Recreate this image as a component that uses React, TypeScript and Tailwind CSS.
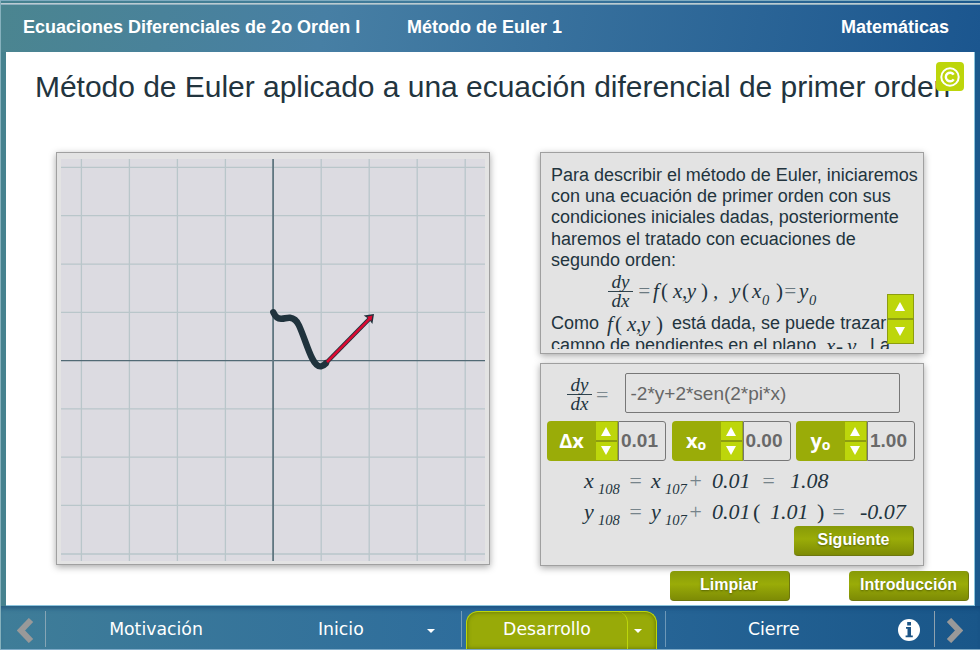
import React from "react";

const SANS = "font-['Liberation_Sans',Arial,sans-serif]";
const MATH = "font-['Liberation_Serif',serif] italic";

// A piece of a formula; `w` is the advance up to the next piece.
function T({ w, c = "", children }: { w: string; c?: string; children?: React.ReactNode }) {
  return <span className={`inline-block shrink-0 whitespace-pre ${w} ${c}`}>{children}</span>;
}

function Fraction() {
  return (
    <span className={`flex w-[25px] shrink-0 flex-col items-center text-[19px] leading-[19px] ${MATH}`}>
      <span className="h-[18px] w-full border-b border-[#30434d] text-center leading-[15px]">dy</span>
      <span className="h-[18px] text-center leading-[18px]">dx</span>
    </span>
  );
}

function Arrow({ down = false }: { down?: boolean }) {
  return (
    <svg viewBox="0 0 10 9" className="mr-[1px] h-[9px] w-[10px]" fill="#fff">
      {down ? <path d="M0 0H10L5 9Z" /> : <path d="M5 0L10 9H0Z" />}
    </svg>
  );
}

function Button({ children }: { children: React.ReactNode }) {
  return (
    <button
      className={`h-[30px] w-[120px] rounded-[4px] border-r border-b border-[#6d760f] bg-linear-to-b from-[#879a08] via-[#9aac08] via-45% to-[#7d8b05] pb-[2px] text-center text-[16px] font-bold text-white [text-shadow:0_1px_2px_rgba(50,60,0,0.6)] ${SANS}`}
    >
      {children}
    </button>
  );
}

function Spinner({ label, sub, value }: { label: string; sub?: boolean; value: string }) {
  return (
    <div className="flex h-[40px] w-[119px] shrink-0">
      <div className="flex w-[49px] items-center justify-center rounded-l-[4px] bg-[#9aac08] font-['Open_Sans','Noto_Sans',sans-serif] text-[20px] font-bold text-white">
        <span>{label}</span>
        {sub && <span className="pt-[6px] text-[14px]">o</span>}
      </div>
      <div className="flex w-[22px] flex-col border border-l-0 border-[#9aac10] bg-[#bdd60b]">
        <div className="flex h-[20px] items-center justify-center border-b-2 border-[#8d9d10]"><Arrow /></div>
        <div className="flex flex-1 items-center justify-center pb-[1px]"><Arrow down /></div>
      </div>
      <div className="flex flex-1 items-center rounded-r-[3px] border border-[#777] pt-[1px] pl-[2px] text-[19px] font-bold text-[#696969]">
        {value}
      </div>
    </div>
  );
}

const gridX = [81.4, 129.4, 177.4, 225.4, 321.2, 369.2, 417.2, 465.2];
const gridY = [167.4, 215.7, 264.2, 312.4, 408.8, 457.2, 505.4, 554];

function Plot() {
  return (
    <svg viewBox="61 159 424 402" className="h-[402px] w-[424px] bg-[#dcdbe1]">
      <g stroke="#b9c6ca" strokeWidth="1.3">
        {gridX.map((x) => <path key={x} d={`M${x} 159V561`} />)}
        {gridY.map((y) => <path key={y} d={`M61 ${y}H485`} />)}
      </g>
      <path d="M61 360.6H485" stroke="#526a75" strokeWidth="1.2" />
      <path d="M273.1 159V561" stroke="#607680" strokeWidth="1.8" />
      <path
        d="M273.3 312.3C275.5 317.5 278 319 281.5 318.8C285 318.5 287 317.6 290 317.8C294 318.2 296.5 320 299 325.5C304 336.5 307.5 349 312 358C315.5 365 318 366.8 321 366.3C323 366 324.5 364.8 326 363.2"
        fill="none"
        stroke="#20333d"
        strokeWidth="6.4"
        strokeLinecap="round"
        strokeLinejoin="round"
      />
      <path d="M327 362L370.5 317.8" stroke="#20333d" strokeWidth="4.2" />
      <path d="M374 314L363.7 315.4L367 317.8L370.6 321.4L372.4 324Z" fill="#20333d" />
      <path d="M327 362L371 317.3" stroke="#dc0a32" strokeWidth="2.5" />
      <path d="M372.5 315.5L367 316.8L371.2 321Z" fill="#dc0a32" />
    </svg>
  );
}

const panel = "border border-[#a0a0a0] bg-[#e3e3e3] shadow-[0_2px_7px_rgba(0,0,0,0.35)]";

export default function App() {
  return (
    <div className={`flex h-[650px] w-[980px] flex-col overflow-hidden border-l border-[#86b1bd] bg-linear-to-r from-[#46828f] via-[#3d789d] via-50% to-[#1b598d] text-[#22343e] ${SANS}`}>
      <div className="h-[3px] shrink-0 border-t border-[#7fabc0]" />
      <div className="h-[2px] shrink-0 border-y border-t-[#bccbd2] border-b-[#8eafbf]" />
      <header className="flex h-[47px] shrink-0 items-center bg-linear-[100deg] from-[#4b8590] via-[#477fa4] via-33% to-[#1b568f] pb-[3px] pl-[22px] text-[18px] font-bold whitespace-nowrap text-white">
        <span className="w-[384px]">Ecuaciones Diferenciales de 2o Orden I</span>
        <span className="flex-1">Método de Euler 1</span>
        <span className="pr-[31px]">Matemáticas</span>
      </header>

      <main className="relative ml-[5px] flex h-[554px] w-[969px] shrink-0 flex-col border-r border-b border-[#8cc4dc] bg-white">
        <h1 className="h-[100px] pt-[17px] pl-[29px] text-[30px] leading-[36px] font-normal tracking-[-0.03px] whitespace-nowrap">
          Método de Euler aplicado a una ecuación diferencial de primer orden
        </h1>
        <div className="absolute top-[10px] right-[10px] flex h-[29px] w-[28px] items-center justify-center rounded-[4px] bg-[#bdd60b]">
          <svg viewBox="0 0 20 20" className="h-[20px] w-[20px]" fill="none" stroke="#fff">
            <circle cx="10" cy="10" r="8.7" strokeWidth="2" />
            <path d="M13.7 7.6A4.3 4.3 0 1 0 13.7 12.4" strokeWidth="2.4" />
          </svg>
        </div>

        <div className="flex gap-[50px] pl-[50px]">
          <section className={`flex h-[413px] w-[434px] shrink-0 pt-[6px] pl-[4px] ${panel}`}>
            <Plot />
          </section>

          <div className="flex w-[384px] shrink-0 flex-col gap-[9px]">
            <section className={`relative h-[202px] pt-[12px] pl-[10px] ${panel}`}>
              <div className="h-[184px] overflow-hidden text-[18px] leading-[21.2px] whitespace-nowrap">
                <p className="tracking-[-0.01px]">
                  Para describir el método de Euler, iniciaremos<br />
                  con una ecuación de primer orden con sus<br />
                  condiciones iniciales dadas, posteriormente<br />
                  haremos el tratado con ecuaciones de<br />
                  segundo orden:
                </p>
                <div className={`flex h-[42px] items-center pl-[57px] text-[21px] ${MATH}`}>
                  <Fraction />
                  <T w="w-[20px]" c="pl-[4px] text-[#6b7980]">=</T>
                  <T w="w-[8px]">f</T>
                  <T w="w-[12px]" c="not-italic">(</T>
                  <T w="w-[28px]" c="tracking-[-0.4px]">x,y</T>
                  <T w="w-[12px]" c="not-italic">)</T>
                  <T w="w-[18px]">,</T>
                  <T w="w-[11px]">y</T>
                  <T w="w-[10px]" c="not-italic">(</T>
                  <T w="w-[10px]">x</T>
                  <T w="w-[14px]" c="pt-[17px] text-[14.5px]">0</T>
                  <T w="w-[7px]" c="not-italic">)</T>
                  <T w="w-[16px]" c="text-[#6b7980]">=</T>
                  <T w="w-[10px]">y</T>
                  <T w="w-[10px]" c="pt-[17px] text-[14.5px]">0</T>
                </div>
                <div className="flex h-[22px] items-center">
                  <T w="w-[56px]">Como</T>
                  <span className={`flex w-[65px] text-[21px] leading-[22px] ${MATH}`}>
                    <T w="w-[8px]">f</T>
                    <T w="w-[12px]" c="not-italic">(</T>
                    <T w="w-[29px]" c="tracking-[-0.4px]">x,y</T>
                    <T w="w-[11px]" c="not-italic">)</T>
                  </span>
                  <span>está dada, se puede trazar</span>
                </div>
                <div className="flex h-[22px] items-center">
                  <T w="w-[275px]">campo de pendientes en el plano</T>
                  <span className={`flex w-[44px] text-[21px] leading-[20px] ${MATH}`}>
                    <T w="w-[10px]">x</T>
                    <T w="w-[11px]">-</T>
                    <T w="w-[14px]">y</T>
                  </span>
                  <span>La</span>
                </div>
              </div>
              <div className="absolute top-[141px] right-[9px] flex h-[50px] w-[27px] flex-col border border-[#8d9d10] bg-[#bdd60b]">
                <div className="flex h-[25px] items-center justify-center border-b-2 border-[#8d9d10]"><Arrow /></div>
                <div className="flex flex-1 items-center justify-center"><Arrow down /></div>
              </div>
            </section>

            <section className={`flex h-[203px] flex-col pt-[9px] ${panel}`}>
              <div className="flex h-[40px] items-center pl-[26px]">
                <span className="pt-[3px]"><Fraction /></span>
                <span className="w-[32.5px] pt-[2px] pl-[4px] text-[22px] text-[#7d898f] font-['Liberation_Serif',serif]">=</span>
                <div className="flex h-[40px] w-[275px] items-center rounded-[2px] border border-[#777] pt-[2px] pl-[5px] text-[19px] text-[#666]">
                  -2*y+2*sen(2*pi*x)
                </div>
              </div>
              <div className="flex gap-[5.5px] pt-[8px] pl-[6px]">
                <Spinner label="Δx" value="0.01" />
                <Spinner label="x" sub value="0.00" />
                <Spinner label="y" sub value="1.00" />
              </div>
              <div className={`flex h-[31px] items-center pt-[7px] pl-[43px] text-[22px] ${MATH}`}>
                <T w="w-[14px]">x</T>
                <T w="w-[30px]" c="pt-[20px] text-[14.6px]">108</T>
                <T w="w-[23px]" c="text-[#76838a]">=</T>
                <T w="w-[14px]">x</T>
                <T w="w-[23px]" c="pt-[20px] text-[14.6px]">107</T>
                <T w="w-[24px]" c="text-[#76838a]">+</T>
                <T w="w-[49px]">0.01</T>
                <T w="w-[29px]" c="text-[#76838a]">=</T>
                <T w="w-[40px]">1.08</T>
              </div>
              <div className={`flex h-[31px] items-center pt-[7px] pl-[43px] text-[22px] ${MATH}`}>
                <T w="w-[14px]">y</T>
                <T w="w-[30px]" c="pt-[20px] text-[14.6px]">108</T>
                <T w="w-[23px]" c="text-[#76838a]">=</T>
                <T w="w-[14px]">y</T>
                <T w="w-[23px]" c="pt-[20px] text-[14.6px]">107</T>
                <T w="w-[24px]" c="text-[#76838a]">+</T>
                <T w="w-[41px]">0.01</T>
                <T w="w-[17px]" c="not-italic">(</T>
                <T w="w-[47px]">1.01</T>
                <T w="w-[14px]" c="not-italic">)</T>
                <T w="w-[29px]" c="text-[#76838a]">=</T>
                <T w="w-[46px]">-0.07</T>
              </div>
              <div className="mt-[3px] flex justify-end pr-[9px]">
                <Button>Siguiente</Button>
              </div>
            </section>
          </div>
        </div>
        <div className="mt-[5px] flex gap-[59.5px] pl-[663.5px]">
          <Button>Limpiar</Button>
          <Button>Introducción</Button>
        </div>
      </main>

      <nav className="flex h-[44px] shrink-0 items-center border-b border-[#7fabc8] bg-linear-to-r from-[#3f7d98] via-[#2d6c9c] via-50% to-[#195689] font-['DejaVu_Sans',sans-serif] text-[17.3px] text-white shadow-[inset_0_5px_5px_-3px_rgba(10,50,100,0.5)]">
        <div className="mt-[3px] flex h-[36px] w-[45px] items-center border-r border-[#86a5b5] pt-[3px] pl-[16px]">
          <svg viewBox="0 0 17 25" className="h-[25px] w-[17px]" fill="none" stroke="#999" strokeWidth="6">
            <path d="M14 2L4 12.5L14 23" />
          </svg>
        </div>
        <div className="flex w-[220px] justify-center pt-[4px]">Motivación</div>
        <div className="mt-[3px] flex h-[36px] w-[196px] items-center border-r border-[#739cb9] pt-[1px] pl-[52px]">
          <span className="w-[109px]">Inicio</span>
          <svg viewBox="0 0 8 4" className="mt-[2px] h-[4px] w-[8px]" fill="#fff"><path d="M0 0H8L4 4Z" /></svg>
        </div>
        <div className="mt-[5px] ml-[4px] flex h-[38px] w-[191px] overflow-hidden rounded-t-[12px] border border-b-0 border-[#bdd60b] bg-[#98aa08] shadow-[inset_0_0_4px_rgba(70,90,0,0.7)]">
          <div className="flex w-[161px] items-center justify-center rounded-tr-[10px] border-r border-[#bdd60b] pb-[2px]">
            <span>Desarrollo</span>
          </div>
          <div className="flex flex-1 items-center justify-center pr-[8px]">
            <svg viewBox="0 0 8 4" className="h-[4px] w-[8px]" fill="#fff"><path d="M0 0H8L4 4Z" /></svg>
          </div>
        </div>
        <div className="mt-[3px] ml-[8px] flex h-[36px] w-[270px] items-center border-x border-l-[#6d98b8] border-r-[#8fa1ae] pt-[1px] pl-[82px]">
          <span className="w-[150px]">Cierre</span>
          <svg viewBox="0 0 22 22" className="h-[22px] w-[22px]">
            <circle cx="11" cy="11" r="11" fill="#fff" />
            <path d="M9.2 3h3.8v3.4H9.2zM8 8h5v8.5h1.8v1.8H7.6v-1.8h1.9V9.8H8z" fill="#1c5485" />
          </svg>
        </div>
        <div className="pt-[6px] pl-[11px]">
          <svg viewBox="0 0 17 25" className="h-[25px] w-[17px]" fill="none" stroke="#999" strokeWidth="6">
            <path d="M3 2L13 12.5L3 23" />
          </svg>
        </div>
      </nav>
    </div>
  );
}
